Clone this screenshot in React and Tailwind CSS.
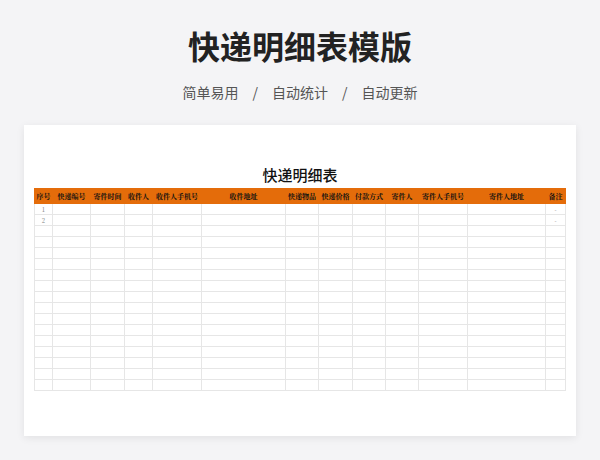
export default function App(){
const cols=[["序号",18],["快递编号",38],["寄件时间",34],["收件人",28],["收件人手机号",49],["收件地址",84],["快递物品",33],["快递价格",34],["付款方式",33],["寄件人",33],["寄件人手机号",49],["寄件人地址",78],["备注",20]];
const rows=Array.from({length:17},(_,i)=>i);
return(<div className="w-[600px] h-[460px] bg-[#f4f4f6] flex flex-col items-center" style={{fontFamily:'"Noto Sans CJK SC",sans-serif'}}>
<div className="mt-[24px] text-[32px] leading-[42px] font-bold text-[#222]">快递明细表模版</div>
<div className="mt-[16px] flex gap-[14px] text-[14px] text-[#555] leading-[20px]"><span>简单易用</span><span>/</span><span>自动统计</span><span>/</span><span>自动更新</span></div>
<div className="mt-[23px] w-[552px] h-[311px] bg-white shadow-[0_2px_8px_rgba(0,0,0,0.08)] flex flex-col items-center">
<div className="mt-[40px] text-[15px] leading-[20px] font-medium text-[#111]">快递明细表</div>
<table className="mt-[3px] border-collapse text-[7px]" style={{fontFamily:'"Noto Serif CJK SC","Noto Sans CJK SC",serif'}}>
<thead><tr className="bg-[#e46c0a] text-[#111] h-[15px]">{cols.map(([t,w])=><th key={t} style={{width:w}} className="font-bold p-0 border border-[#e46c0a]">{t}</th>)}</tr></thead>
<tbody>{rows.map(r=><tr key={r} className="h-[11px]">{cols.map(([t],j)=><td key={t} className="border border-[#e6e6e6] p-0 text-center text-[6px] text-[#777]">{j===0&&r<2?r+1:j===12&&r<2?"-":""}</td>)}</tr>)}</tbody>
</table></div></div>);}
